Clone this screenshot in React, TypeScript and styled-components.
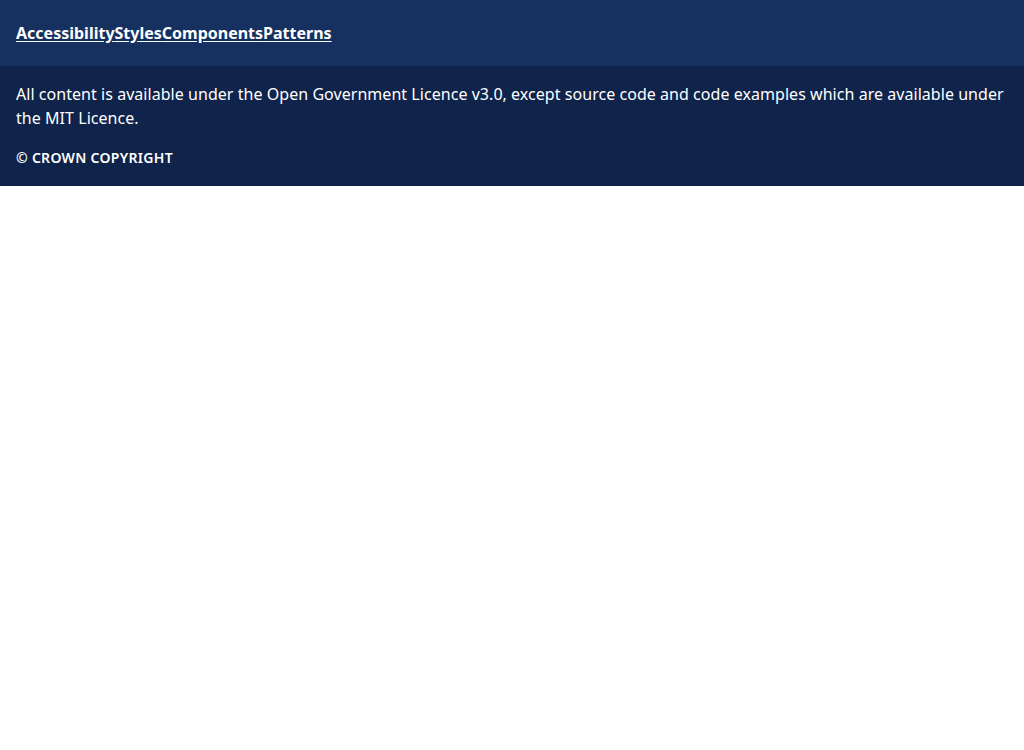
import { createGlobalStyle } from 'styled-components';
import styled from 'styled-components';

const GlobalStyle = createGlobalStyle`
  body {
    margin: 0;
    font-family: "Noto Sans", "Open Sans", sans-serif;
    background: #fff;
  }
`;

const links = ['Accessibility', 'Styles', 'Components', 'Patterns'];

export default function App() {
  return (
    <>
      <GlobalStyle />
      <NavBar>
        <NavList>
          {links.map((l) => (
            <NavItem key={l}>
              <NavLink href="#">{l}</NavLink>
            </NavItem>
          ))}
        </NavList>
      </NavBar>
      <Footer>
        <Licence>
          All content is available under the Open Government Licence v3.0, except source code and code
          examples which are available under the MIT Licence.
        </Licence>
        <Copyright>© Crown copyright</Copyright>
      </Footer>
    </>
  );
}

const NavBar = styled.nav`
  background-color: #16305f;
  padding: 21px 16px;
`;

const NavList = styled.ul`
  display: flex;
  list-style: none;
  margin: 0;
  padding: 0;
`;

const NavItem = styled.li`
  line-height: 24px;
`;

const NavLink = styled.a`
  color: #fff;
  font-size: 16px;
  font-weight: 700;
  text-decoration: underline;
  text-underline-offset: 2px;
`;

const Footer = styled.footer`
  background-color: #10234a;
  color: #fff;
  padding: 16px 16px 16px;
`;

const Licence = styled.p`
  margin: 0 0 16px;
  font-size: 16px;
  line-height: 24px;
  letter-spacing: 0.045px;
`;

const Copyright = styled.p`
  margin: 0;
  font-size: 14px;
  font-weight: 600;
  line-height: 24px;
  text-transform: uppercase;
  letter-spacing: 0.3px;
`;
